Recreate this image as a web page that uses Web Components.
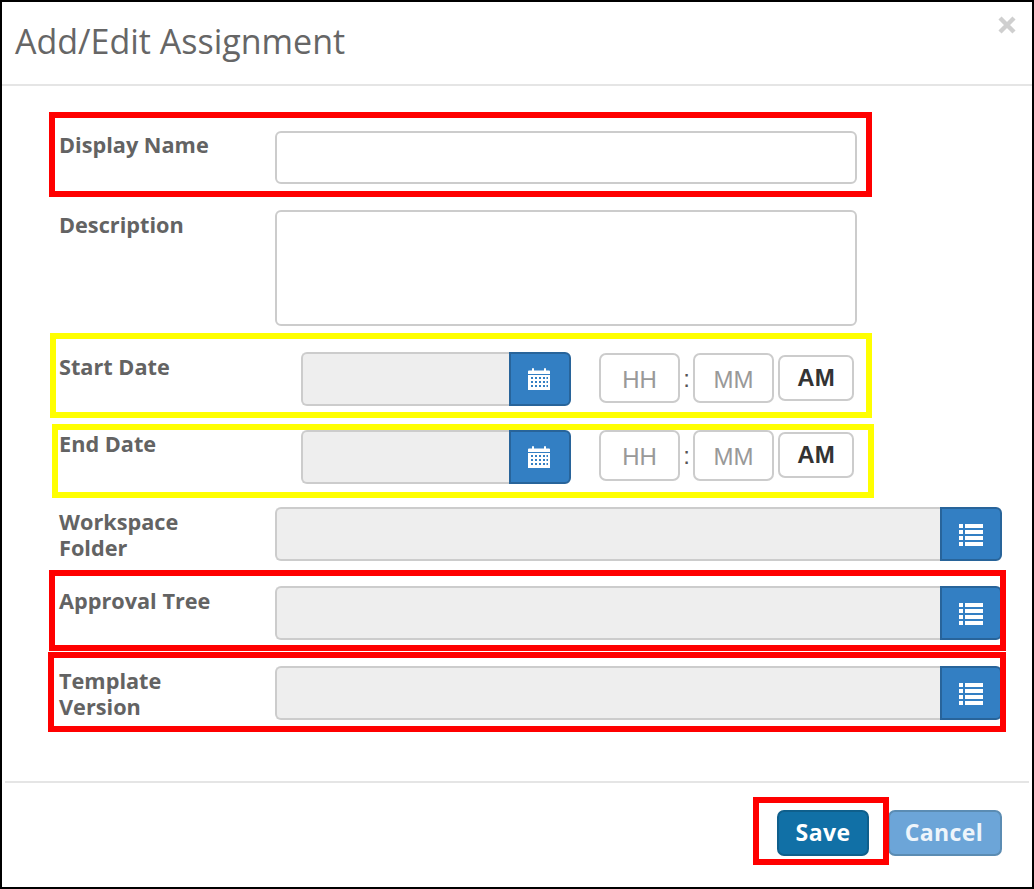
<!DOCTYPE html>
<html>
<head>
<meta charset="utf-8">
<title>Add/Edit Assignment</title>
<style>
	html, body { margin: 0; padding: 0; background: #fff; }
</style>
</head>
<body>
<assignment-dialog heading="Add/Edit Assignment">
	<form-row label="Display Name" gap="45" label-top="1"><text-box height="53"></text-box></form-row>
	<form-row label="Description" gap="26"><text-box height="116"></text-box></form-row>
	<form-row label="Start Date" gap="26" label-top="2"><date-time></date-time></form-row>
	<form-row label="End Date" gap="24" label-top="1"><date-time second></date-time></form-row>
	<form-row label="Workspace Folder" gap="23"><picker-box></picker-box></form-row>
	<form-row label="Approval Tree" gap="25"><picker-box></picker-box></form-row>
	<form-row label="Template Version" gap="26"><picker-box></picker-box></form-row>

	<action-button slot="footer" kind="save">Save</action-button>
	<action-button slot="footer" kind="cancel">Cancel</action-button>

	<note-box slot="marks" color="#ff0000" box="49,112,823,85"></note-box>
	<note-box slot="marks" color="#ffff00" box="50,333,822,85"></note-box>
	<note-box slot="marks" color="#ffff00" box="52,424,822,74"></note-box>
	<note-box slot="marks" color="#ff0000" box="49,570,957,81"></note-box>
	<note-box slot="marks" color="#ff0000" box="48,652,958,80"></note-box>
	<note-box slot="marks" color="#ff0000" box="753,797,136,68"></note-box>
</assignment-dialog>

<script>
(function () {
	const UI_FONT = `"Open Sans", "Noto Sans", sans-serif`;
	const FIELD_FONT = `"Liberation Sans", Arial, sans-serif`;

	const calendarIcon = `
		<svg width="24" height="24" viewBox="0 0 24 24">
			<path fill="#fff" d="M1 4.5 Q1 3.5 2 3.5 H5 V2 Q5 1 6 1 Q7 1 7 2 V3.5 H17 V2 Q17 1 18 1 Q19 1 19 2 V3.5 H22 Q23 3.5 23 4.5 V7 H1 Z"/>
			<path fill="#fff" fill-rule="evenodd" d="M1 8 H23 V23 H1 Z
				M4 10 h2 v2 h-2 z M8 10 h2 v2 h-2 z M12 10 h2 v2 h-2 z M16 10 h2 v2 h-2 z M19.5 10 h1.5 v2 h-1.5 z
				M4 14 h2 v2 h-2 z M8 14 h2 v2 h-2 z M12 14 h2 v2 h-2 z M16 14 h2 v2 h-2 z M19.5 14 h1.5 v2 h-1.5 z
				M4 18 h2 v2 h-2 z M8 18 h2 v2 h-2 z M12 18 h2 v2 h-2 z M16 18 h2 v2 h-2 z M19.5 18 h1.5 v2 h-1.5 z"/>
		</svg>`;

	const listIcon = `
		<svg width="24" height="22" viewBox="0 0 24 22">
			<g fill="#fff">
				<rect x="0" y="0" width="4" height="4"/><rect x="6" y="0" width="18" height="4"/>
				<rect x="0" y="6" width="4" height="4"/><rect x="6" y="6" width="18" height="4"/>
				<rect x="0" y="12" width="4" height="4"/><rect x="6" y="12" width="18" height="4"/>
				<rect x="0" y="18" width="4" height="4"/><rect x="6" y="18" width="18" height="4"/>
			</g>
		</svg>`;

	class AssignmentDialog extends HTMLElement {
		constructor() {
			super();
			this._root = this.attachShadow({ mode: 'open' });
			this._root.innerHTML = `
			<style>
				:host {
					display: block;
					position: relative;
					box-sizing: border-box;
					width: 1034px;
					height: 889px;
					border: 2px solid #000;
					background: #fff;
					font-family: ${UI_FONT};
					color: #666666;
				}
				header {
					box-sizing: border-box;
					height: 84px;
					border-bottom: 2px solid #e5e5e5;
					padding: 16px 0 0 13px;
					position: relative;
				}
				h1 {
					margin: 0;
					font-size: 34px;
					line-height: 46px;
					font-weight: 400;
					color: #666666;
				}
				.close {
					position: absolute;
					top: 13px;
					right: 15px;
					width: 20px;
					height: 20px;
				}
				main { padding-left: 57px; }
				footer {
					position: absolute;
					left: 3px;
					right: 3px;
					top: 779px;
					height: 76px;
					box-sizing: border-box;
					border-top: 2px solid #e5e5e5;
					display: flex;
					justify-content: flex-end;
					align-items: flex-start;
					padding: 27px 27px 0 0;
					gap: 19px;
				}
			</style>
			<header>
				<h1>${this.getAttribute('heading')}</h1>
				<svg class="close" viewBox="0 0 20 20"><path d="M3 3 L17 17 M17 3 L3 17" stroke="#cfcfcf" stroke-width="4.4"/></svg>
			</header>
			<main><slot></slot></main>
			<footer><slot name="footer"></slot></footer>
			<slot name="marks"></slot>`;
		}
	}

	class FormRow extends HTMLElement {
		constructor() {
			super();
			const label = this.getAttribute('label');
			const gap = this.getAttribute('gap') || 25;
			const labelTop = this.getAttribute('label-top') || 2;
			this._root = this.attachShadow({ mode: 'open' });
			this._root.innerHTML = `
			<style>
				:host {
					display: grid;
					grid-template-columns: 216px 1fr;
					margin-top: ${gap}px;
				}
				label {
					font-size: 21.7px;
					line-height: 26px;
					font-weight: 700;
					color: #636363;
					padding-top: ${labelTop}px;
					width: 170px;
				}
			</style>
			<label>${label}</label>
			<div><slot></slot></div>`;
		}
	}

	class TextBox extends HTMLElement {
		constructor() {
			super();
			this._root = this.attachShadow({ mode: 'open' });
			this._root.innerHTML = `
			<style>
				:host {
					display: block;
					box-sizing: border-box;
					width: 582px;
					height: ${this.getAttribute('height')}px;
					border: 2px solid #cccccc;
					border-radius: 6px;
					background: #fff;
				}
			</style>`;
		}
	}

	class PickerBox extends HTMLElement {
		constructor() {
			super();
			this._root = this.attachShadow({ mode: 'open' });
			this._root.innerHTML = `
			<style>
				:host { display: flex; width: 727px; height: 54px; }
				.field {
					flex: 1;
					box-sizing: border-box;
					border: 2px solid #cccccc;
					border-right: 0;
					border-radius: 6px 0 0 6px;
					background: #eeeeee;
				}
				.btn {
					width: 62px;
					box-sizing: border-box;
					background: #337fc3;
					border: 2px solid #28649a;
					border-radius: 0 6px 6px 0;
					display: flex;
					align-items: center;
					justify-content: center;
				}
				svg { margin-top: 1px; }
			</style>
			<div class="field"></div>
			<div class="btn">${listIcon}</div>`;
		}
	}

	class DateTime extends HTMLElement {
		constructor() {
			super();
			const second = this.hasAttribute('second');
			this._root = this.attachShadow({ mode: 'open' });
			this._root.innerHTML = `
			<style>
				:host {
					display: flex;
					align-items: flex-start;
					height: 54px;
					padding-left: 26px;
					font-family: ${FIELD_FONT};
				}
				.field {
					box-sizing: border-box;
					width: 208px;
					height: 54px;
					border: 2px solid #cccccc;
					border-right: 0;
					border-radius: 6px 0 0 6px;
					background: #eeeeee;
				}
				.btn {
					box-sizing: border-box;
					width: 62px;
					height: 54px;
					background: #337fc3;
					border: 2px solid #28649a;
					border-radius: 0 6px 6px 0;
					display: flex;
					align-items: center;
					justify-content: center;
				}
				svg { margin-left: -2px; }
				.time {
					display: flex;
					align-items: flex-start;
					margin-left: 28px;
					margin-top: ${second ? 0 : 1}px;
				}
				.unit {
					box-sizing: border-box;
					width: 81px;
					height: ${second ? 51 : 50}px;
					border: 2px solid #cccccc;
					border-radius: 7px;
					color: #999999;
					font-size: 24px;
					display: flex;
					align-items: center;
					justify-content: center;
					padding-top: 3px;
				}
				.colon {
					width: 13px;
					text-align: center;
					font-size: 24px;
					color: #555555;
					line-height: 51px;
				}
				.ampm {
					box-sizing: border-box;
					width: 76px;
					height: 46px;
					margin: 2px 0 0 4px;
					border: 2px solid #cccccc;
					border-radius: 7px;
					color: #333333;
					font-size: 24px;
					font-weight: 700;
					display: flex;
					align-items: center;
					justify-content: center;
				}
			</style>
			<div class="field"></div>
			<div class="btn">${calendarIcon}</div>
			<div class="time">
				<div class="unit">HH</div>
				<div class="colon">:</div>
				<div class="unit">MM</div>
				<div class="ampm">AM</div>
			</div>`;
		}
	}

	class ActionButton extends HTMLElement {
		constructor() {
			super();
			const save = this.getAttribute('kind') === 'save';
			this._root = this.attachShadow({ mode: 'open' });
			this._root.innerHTML = `
			<style>
				:host {
					display: flex;
					align-items: center;
					justify-content: center;
					box-sizing: border-box;
					height: 46px;
					width: ${save ? 92 : 114}px;
					padding: 0 ${save ? 0 : 2}px 2px 0;
					border: 2px solid ${save ? '#0f5f8c' : '#5b8cb3'};
					border-radius: 7px;
					background: ${save ? '#1170a6' : '#6ca5d8'};
					color: ${save ? '#fff' : '#eef5fb'};
					font-family: ${UI_FONT};
					font-size: 23px;
					letter-spacing: 0.4px;
					font-weight: 700;
				}
			</style>
			<slot></slot>`;
		}
	}

	class NoteBox extends HTMLElement {
		constructor() {
			super();
			const [x, y, w, h] = this.getAttribute('box').split(',');
			this._root = this.attachShadow({ mode: 'open' });
			// coordinates are page pixels, the dialog has a 2px border
			this._root.innerHTML = `
			<style>
				:host {
					position: absolute;
					box-sizing: border-box;
					left: ${x - 2}px;
					top: ${y - 2}px;
					width: ${w}px;
					height: ${h}px;
					border: 6px solid ${this.getAttribute('color')};
					pointer-events: none;
				}
			</style>`;
		}
	}

	window.customElements.define('assignment-dialog', AssignmentDialog);
	window.customElements.define('form-row', FormRow);
	window.customElements.define('text-box', TextBox);
	window.customElements.define('picker-box', PickerBox);
	window.customElements.define('date-time', DateTime);
	window.customElements.define('action-button', ActionButton);
	window.customElements.define('note-box', NoteBox);
})();
</script>
</body>
</html>
